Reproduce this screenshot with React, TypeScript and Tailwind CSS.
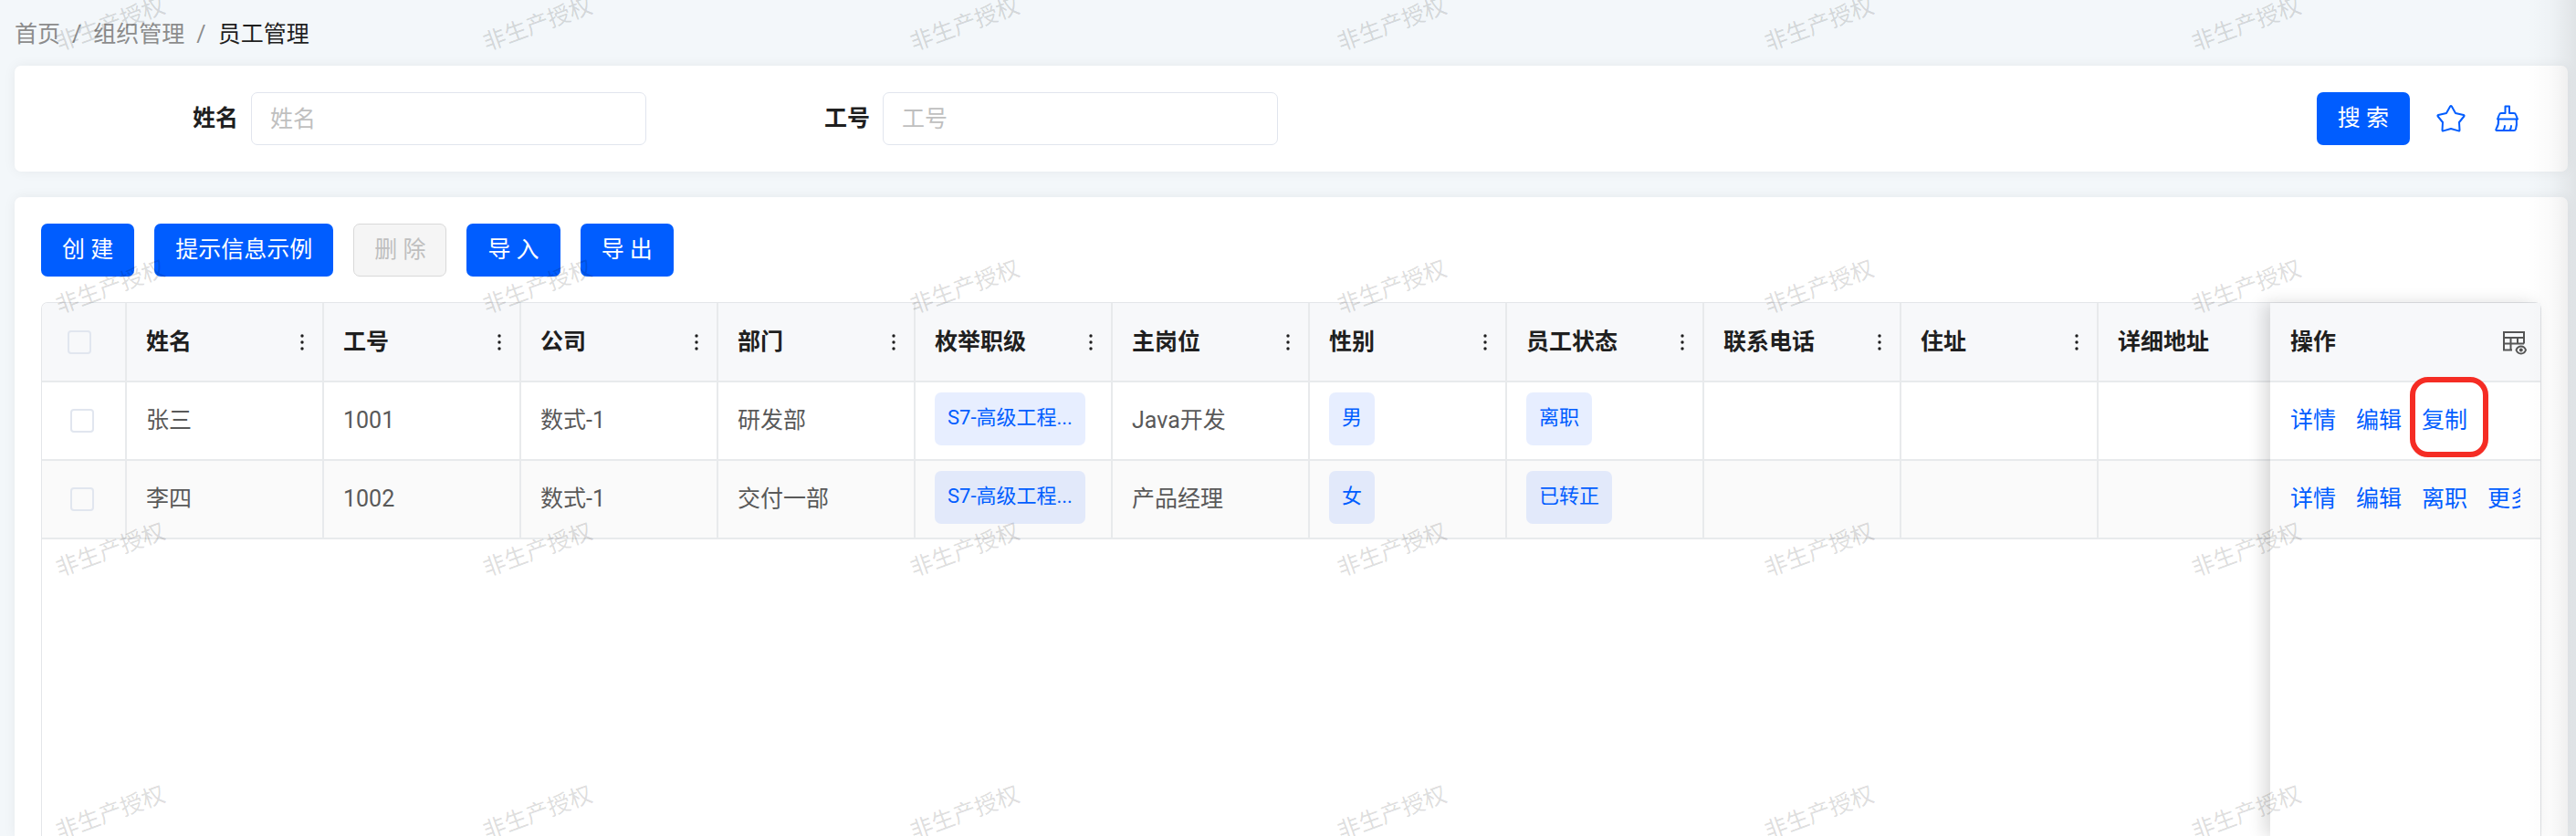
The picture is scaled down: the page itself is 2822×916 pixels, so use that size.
import type { ReactNode } from 'react';

interface Employee {
  name: string;
  code: string;
  company: string;
  department: string;
  level: string;
  position: string;
  gender: string;
  status: string;
  actions: string[];
}

const columns = [
  '姓名',
  '工号',
  '公司',
  '部门',
  '枚举职级',
  '主岗位',
  '性别',
  '员工状态',
  '联系电话',
  '住址',
  '详细地址',
];

const employees: Employee[] = [
  {
    name: '张三',
    code: '1001',
    company: '数式-1',
    department: '研发部',
    level: 'S7-高级工程...',
    position: 'Java开发',
    gender: '男',
    status: '离职',
    actions: ['详情', '编辑', '复制'],
  },
  {
    name: '李四',
    code: '1002',
    company: '数式-1',
    department: '交付一部',
    level: 'S7-高级工程...',
    position: '产品经理',
    gender: '女',
    status: '已转正',
    actions: ['详情', '编辑', '离职', '更多'],
  },
];

function Watermark() {
  return (
    <div
      aria-hidden="true"
      className="pointer-events-none absolute inset-0 z-30 grid grid-cols-[repeat(auto-fill,468px)] auto-rows-[288px] overflow-hidden select-none"
    >
      {Array.from({ length: 24 }, (_, i) => (
        <div key={i} className="pt-[9px] pl-[58px]">
          <span className="block w-[126px] -rotate-20 text-center leading-[36px] text-black/15">
            非生产授权
          </span>
        </div>
      ))}
    </div>
  );
}

function PrimaryButton({ children }: { children: ReactNode }) {
  return (
    <button type="button" className="h-[58px] rounded-[7px] bg-[#005dff] px-[23px] text-white">
      {children}
    </button>
  );
}

function SearchField({ id, label }: { id: string; label: string }) {
  return (
    <div className="flex w-[692px] items-center">
      <label htmlFor={id} className="w-[244px] pr-[14px] text-right font-semibold text-[#1f1f1f]">
        {label}
      </label>
      <input
        id={id}
        type="text"
        placeholder={label}
        className="h-[58px] w-[433px] rounded-[7px] border border-[#e1e5ee] bg-white px-[20px] outline-none placeholder:text-[#bfbfbf]"
      />
    </div>
  );
}

function Tag({ children }: { children: ReactNode }) {
  return (
    <span className="mb-[4px] inline-flex h-[58px] items-center rounded-[7px] bg-[#1055ff]/10 px-[14px] pb-[2px] align-middle text-[22px] whitespace-nowrap text-[#005dff]">
      {children}
    </span>
  );
}

function Checkbox({ label }: { label: string }) {
  return (
    <input
      type="checkbox"
      aria-label={label}
      className="block size-[26px] appearance-none rounded-[4px] border-2 border-[#e1e6ef] bg-transparent"
    />
  );
}

function StarIcon() {
  return (
    <svg viewBox="0 0 32 32" className="size-8" fill="none" stroke="#005dff" strokeWidth="2" strokeLinejoin="round">
      <path d="M15.200 2.600q.8-1.200 1.600 0L21 10l8.800 2q1.300.4.5 1.500L25 20l.5 8.600q0 1.200-1.200.8L16 27l-8.300 2.400q-1.200.4-1.200-.8L7 20l-5.300-6.500q-.8-1.100.5-1.500L11 10z" />
    </svg>
  );
}

function BroomIcon() {
  return (
    <svg
      viewBox="0 0 32 32"
      className="size-8"
      fill="none"
      stroke="#005dff"
      strokeWidth="2"
      strokeLinejoin="round"
      strokeLinecap="round"
    >
      <path d="M14.500 10V2.500H19V10h5q1.500 0 2 1.500l2 5H6l2-5Q8.500 10 10 10z" />
      <path d="M7 17c.5 4-1 8-2.500 10.500q-.7 1.500.8 1.500H24q1.500 0 2-1.500c1-3 1.200-7 .8-10.500M12.500 28.500q1.500-2 1.500-4.500M19.500 28.500q1.500-2 1.500-4.500" />
    </svg>
  );
}

function ColumnSettingIcon() {
  return (
    <svg viewBox="0 0 28 28" className="size-7" fill="none" stroke="#555" strokeWidth="2">
      <path d="M11 22.500H2V3h22v12.500M2 9h22M2 15.500h22M9.500 9v13.500M17 9v6.500" />
      <path d="M15.500 22.500Q17 18.500 20.800 18.500T26 22.500Q24.500 26.500 20.800 26.500T15.500 22.500z" />
      <circle cx="20.800" cy="22.500" r="1" />
    </svg>
  );
}

function MoreIcon() {
  return (
    <svg viewBox="0 0 4 18" className="h-[18px] w-1" fill="#1f1f1f">
      <circle cx="2" cy="2" r="1.700" />
      <circle cx="2" cy="9" r="1.700" />
      <circle cx="2" cy="16" r="1.700" />
    </svg>
  );
}

function DataTable() {
  return (
    <table className="w-[2468px] table-fixed border-collapse">
      <thead>
        <tr className="h-[86px] border-b-2 border-[#e8eaec] bg-[#f7f8fa]">
          <th className="w-[92px] border-r-2 border-[#e8eaec] pl-[28px]">
            <Checkbox label="全选" />
          </th>
          {columns.map((title) => (
            <th key={title} className="w-[216px] border-r-2 border-[#e8eaec] pr-[20px] pl-[21px]">
              <div className="flex items-center justify-between font-semibold text-[#1f1f1f]">
                {title}
                <button type="button" aria-label={`${title}列菜单`}>
                  <MoreIcon />
                </button>
              </div>
            </th>
          ))}
        </tr>
      </thead>
      <tbody>
        {employees.map((row) => (
          <tr
            key={row.code}
            className="h-[86px] border-b-2 border-[#e8eaec] even:bg-[#fafafa] *:border-r-2 *:border-[#e8eaec] *:pl-[21px]"
          >
            <td>
              <div className="pl-[10px]">
                <Checkbox label={`选择${row.name}`} />
              </div>
            </td>
            <td>{row.name}</td>
            <td>{row.code}</td>
            <td>{row.company}</td>
            <td>{row.department}</td>
            <td>
              <Tag>{row.level}</Tag>
            </td>
            <td>{row.position}</td>
            <td>
              <Tag>{row.gender}</Tag>
            </td>
            <td>
              <Tag>{row.status}</Tag>
            </td>
            <td />
            <td />
            <td />
          </tr>
        ))}
      </tbody>
    </table>
  );
}

function ActionTable() {
  return (
    <table className="w-full table-fixed border-collapse">
      <thead>
        <tr className="h-[86px] border-b-2 border-[#e8eaec] bg-[#f7f8fa]">
          <th className="pr-[14px] pl-[22px]">
            <div className="flex items-center justify-between font-semibold text-[#1f1f1f]">
              操作
              <button type="button" aria-label="列设置">
                <ColumnSettingIcon />
              </button>
            </div>
          </th>
        </tr>
      </thead>
      <tbody>
        {employees.map((row) => (
          <tr key={row.code} className="h-[86px] border-b-2 border-[#e8eaec] even:bg-[#fafafa]">
            <td className="px-[22px]">
              <div className="flex gap-[22px] overflow-x-clip whitespace-nowrap text-[#005dff]">
                {row.actions.map((action) => (
                  <a key={action} href="#" className="relative shrink-0">
                    {action}
                    {action === '复制' && (
                      <span className="absolute -top-[30px] -left-[13px] h-[88px] w-[86px] rounded-[20px] border-6 border-[#f52c24]" />
                    )}
                  </a>
                ))}
              </div>
            </td>
          </tr>
        ))}
      </tbody>
    </table>
  );
}

export default function App() {
  return (
    <div className="relative flex min-h-screen flex-col overflow-hidden bg-[#f3f7fa] pr-[9px] pl-4 font-[Roboto,'Noto_Sans_CJK_SC',sans-serif] text-[25px] leading-[36px] text-[#595959]">
      <nav aria-label="面包屑" className="flex h-[72px] items-center gap-[13px] pt-[3px] text-[#8c8c8c]">
        <a href="#">首页</a>
        <span>/</span>
        <a href="#">组织管理</a>
        <span>/</span>
        <span className="text-[#1f1f1f]">员工管理</span>
      </nav>

      <form className="flex items-center justify-between rounded-[7px] bg-white px-[15px] py-[29px] shadow-[0_0_14px_rgba(0,0,0,0.06)]">
        <div className="flex">
          <SearchField id="name" label="姓名" />
          <SearchField id="code" label="工号" />
        </div>
        <div className="flex items-center gap-[29px] pr-[36px]">
          <PrimaryButton>搜 索</PrimaryButton>
          <button type="button" aria-label="收藏">
            <StarIcon />
          </button>
          <button type="button" aria-label="清空">
            <BroomIcon />
          </button>
        </div>
      </form>

      <main className="mt-[28px] flex flex-1 flex-col rounded-t-[7px] bg-white px-[29px] pt-[29px] shadow-[0_0_14px_rgba(0,0,0,0.06)]">
        <div className="flex gap-[22px]">
          <PrimaryButton>创 建</PrimaryButton>
          <PrimaryButton>提示信息示例</PrimaryButton>
          <button
            type="button"
            disabled
            className="h-[58px] rounded-[7px] border border-[#d9d9d9] bg-[#f5f5f5] px-[22px] text-[#bfbfbf]"
          >
            删 除
          </button>
          <PrimaryButton>导 入</PrimaryButton>
          <PrimaryButton>导 出</PrimaryButton>
        </div>

        <div className="mt-[28px] flex flex-1 rounded-t-[7px] border border-b-0 border-[#e4e6e9]">
          <div className="min-w-0 flex-1 overflow-hidden rounded-tl-[6px]">
            <DataTable />
          </div>
          <div className="z-10 w-[296px] rounded-tr-[6px] bg-white shadow-[-7px_0_18px_rgba(0,0,0,0.14)]">
            <ActionTable />
          </div>
        </div>
      </main>

      <Watermark />
      <div className="pointer-events-none absolute inset-y-0 right-0 z-40 w-[54px] bg-linear-to-r from-transparent via-black/2 to-black/8" />
    </div>
  );
}
